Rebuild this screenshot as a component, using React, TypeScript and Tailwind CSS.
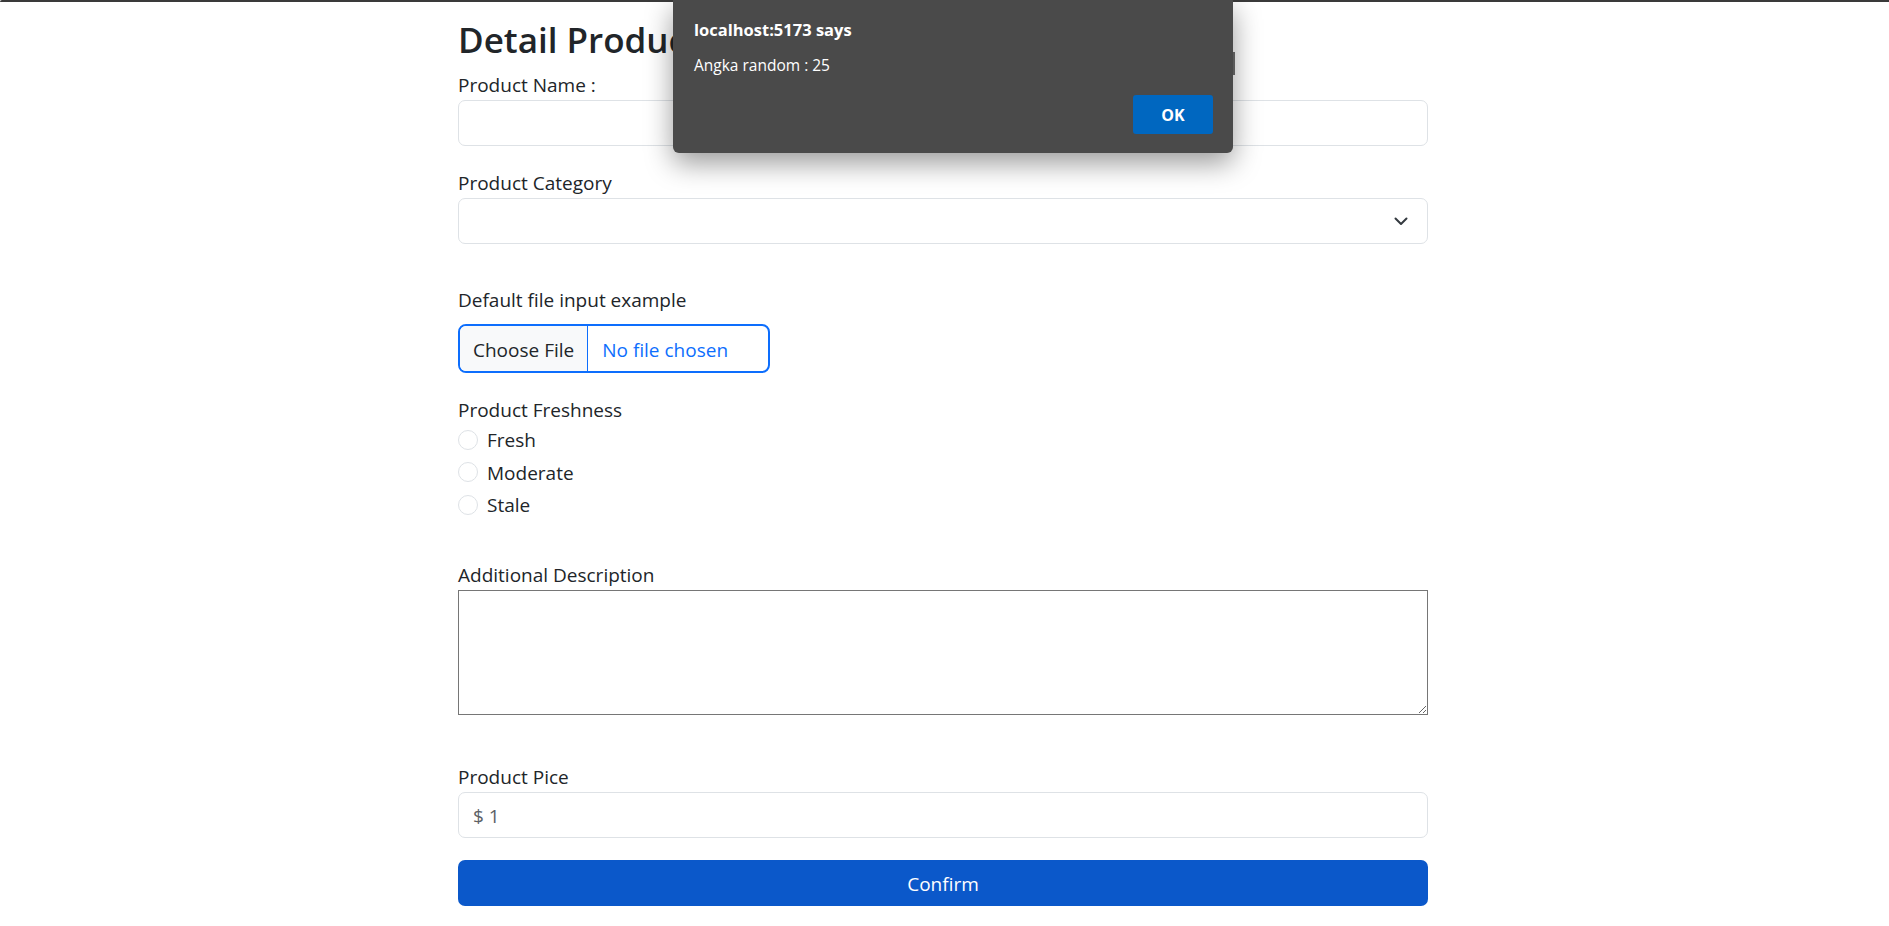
import React from 'react';

const Label: React.FC<{ children: React.ReactNode; className?: string }> = ({ children, className = '' }) => (
  <label className={`block h-[29px] text-[19px] leading-[29px] text-[#212529] ${className}`}>{children}</label>
);

const TextBox: React.FC<{ value?: string }> = ({ value }) => (
  <div className="flex h-[46px] items-center rounded-[7px] border border-[#dee2e6] bg-white px-[14px] pt-[2px] text-[19px] text-[#5c6166]">
    {value}
  </div>
);

const Radio: React.FC<{ label: string }> = ({ label }) => (
  <div className="flex h-[29px] items-center gap-[9px]">
    <span className="h-[20px] w-[20px] rounded-full border border-[#dee2e6] bg-white" />
    <span className="pt-[2px] text-[19px] leading-[29px] text-[#212529]">{label}</span>
  </div>
);

export default function App() {
  return (
    <div className="relative min-h-[926px] bg-white font-['Open_Sans','Noto_Sans',sans-serif]">
      <div className="h-[2px] rounded-tl-[6px] bg-[#3a3a3a]" />

      <form className="ml-[458px] w-[970px]">
        <h2 className="mt-[15px] mb-[8px] text-[35px] leading-[46px] font-semibold text-[#212529]">Detail Product</h2>

        <Label>Product Name :</Label>
        <TextBox />

        <Label className="mt-[23px]">Product Category</Label>
        <div className="flex h-[46px] items-center justify-end rounded-[7px] border border-[#dee2e6] bg-white pr-[19px]">
          <svg width="14" height="9" viewBox="0 0 14 9" fill="none" stroke="#343a40" strokeWidth="2" strokeLinecap="round" strokeLinejoin="round">
            <path d="M1.5 1.5 7 7l5.5-5.5" />
          </svg>
        </div>

        <Label className="mt-[42px] mb-[9px]">Default file input example</Label>
        <div className="flex h-[49px] w-[312px] overflow-hidden rounded-[8px] border-2 border-[#0d6efd] text-[19px]">
          <span className="flex items-center border-r border-[#0d6efd] bg-[#f8f9fa] pt-[3px] pr-[13px] pl-[13px] text-[#212529]">Choose File</span>
          <span className="flex items-center pt-[3px] pl-[14px] text-[#0d6efd]">No file chosen</span>
        </div>

        <Label className="mt-[23px]">Product Freshness</Label>
        <div className="flex flex-col gap-[3.5px]">
          <Radio label="Fresh" />
          <Radio label="Moderate" />
          <Radio label="Stale" />
        </div>

        <Label className="mt-[42px]">Additional Description</Label>
        <textarea className="block h-[125px] w-full rounded-none border border-[#767676] bg-white" />

        <Label className="mt-[48px]">Product Pice</Label>
        <TextBox value="$ 1" />

        <button type="button" className="mt-[22px] flex h-[46px] w-full items-center justify-center rounded-[7px] bg-[#0b58ca] pt-[2px] text-[19px] text-white">
          Confirm
        </button>
      </form>

      {/* alert dialog */}
      <div className="absolute top-0 left-[673px] flex h-[153px] w-[560px] flex-col rounded-b-[6px] bg-[#4a4a4a] pt-[20px] pr-[20px] pl-[21px] shadow-[0_10px_28px_rgba(0,0,0,0.4)]">
        <p className="text-[16.5px] leading-[20px] font-bold text-white">localhost:5173 says</p>
        <p className="mt-[15px] text-[15.5px] leading-[20px] text-white">Angka random : 25</p>
        <button type="button" className="mt-[20px] h-[39px] w-[80px] self-end rounded-[3px] bg-[#0067c0] text-[16px] font-bold text-white">
          OK
        </button>
      </div>
      <div className="absolute top-[52px] left-[1233px] h-[23px] w-[2px] bg-[#5a5a5a]" />
    </div>
  );
}
